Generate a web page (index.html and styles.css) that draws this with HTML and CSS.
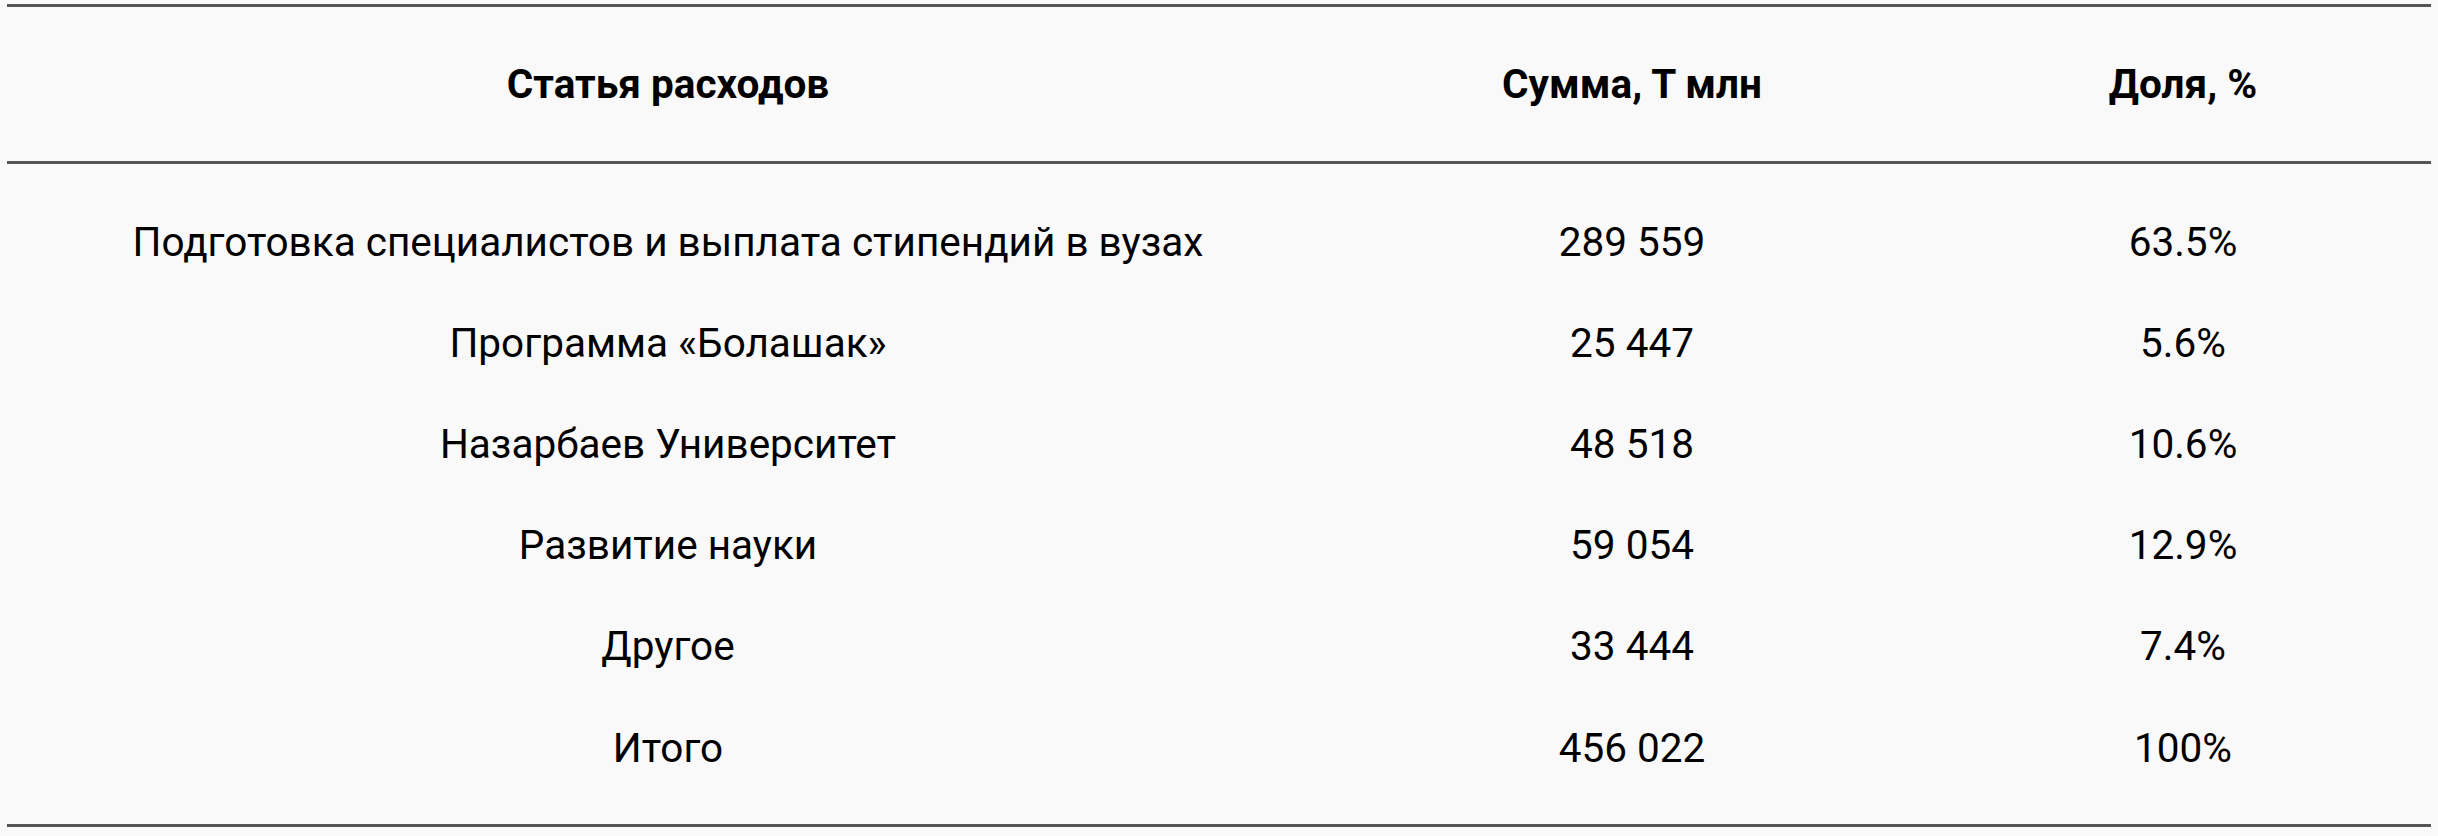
FILE: index.html
```html
<!DOCTYPE html>
<html lang="ru">
<head>
<meta charset="utf-8">
<title>Статья расходов</title>
<link rel="stylesheet" href="styles.css">
</head>
<body>
<div class="table">
  <div class="head">
    <div class="cell">Статья расходов</div>
    <div class="cell">Сумма, Т млн</div>
    <div class="cell">Доля, %</div>
  </div>
  <div class="body">
    <div class="row">
      <div class="cell">Подготовка специалистов и выплата стипендий в вузах</div>
      <div class="cell">289 559</div>
      <div class="cell">63.5%</div>
    </div>
    <div class="row">
      <div class="cell">Программа «Болашак»</div>
      <div class="cell">25 447</div>
      <div class="cell">5.6%</div>
    </div>
    <div class="row">
      <div class="cell">Назарбаев Университет</div>
      <div class="cell">48 518</div>
      <div class="cell">10.6%</div>
    </div>
    <div class="row">
      <div class="cell">Развитие науки</div>
      <div class="cell">59 054</div>
      <div class="cell">12.9%</div>
    </div>
    <div class="row">
      <div class="cell">Другое</div>
      <div class="cell">33 444</div>
      <div class="cell">7.4%</div>
    </div>
    <div class="row">
      <div class="cell">Итого</div>
      <div class="cell">456 022</div>
      <div class="cell">100%</div>
    </div>
  </div>
</div>
</body>
</html>
```
FILE: styles.css
```css
html, body {
  background: #f9f9f9;
}
body {
  margin: 4px 7px 0 7px;
  font-family: Roboto, "Liberation Sans", sans-serif;
  font-size: 40.5px;
  color: #000;
}
.table {
  width: 2424px;
  border-top: 3px solid #555;
  border-bottom: 3px solid #555;
}
.head, .row {
  display: grid;
  grid-template-columns: 1322px 606px 496px;
  align-items: center;
}
.head {
  height: 154px;
  border-bottom: 3px solid #555;
  font-weight: 700;
}
.body {
  padding: 27px 0 26px;
}
.row {
  height: 101.2px;
}
.cell {
  text-align: center;
  white-space: nowrap;
}
```
